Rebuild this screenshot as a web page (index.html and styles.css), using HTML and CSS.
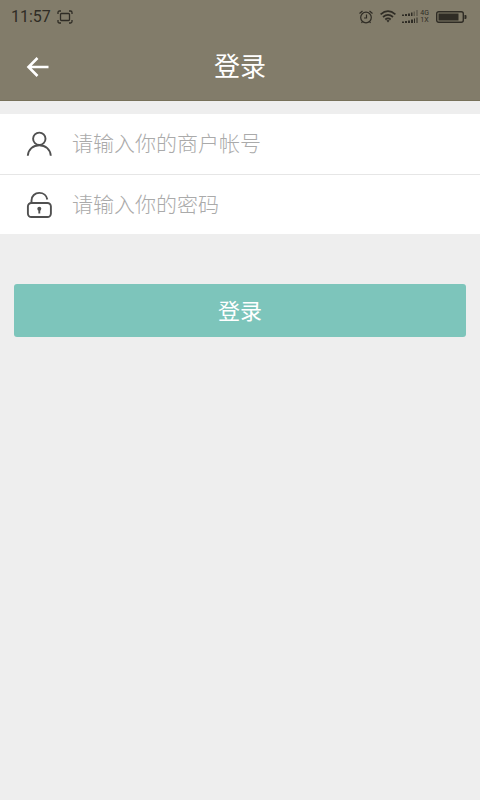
FILE: index.html
```html
<!DOCTYPE html>
<html lang="zh-CN">
<head>
<meta charset="utf-8">
<meta name="viewport" content="width=device-width, initial-scale=1">
<title>登录</title>
<link rel="stylesheet" href="styles.css">
</head>
<body>
<header class="top">
  <div class="status">
    <span class="clock">11:57</span>
    <svg width="16" height="14" viewBox="0 0 16 14" fill="none" stroke="#2f2c25" stroke-width="1.3" aria-hidden="true">
      <path d="M1 4V2.500Q1 1 2.500 1H4M12 1h1.500Q15 1 15 2.500V4M15 10v1.500Q15 13 13.500 13H12M4 13H2.500Q1 13 1 11.500V10"/>
      <rect x="3.500" y="3.500" width="9" height="7" rx="1"/>
    </svg>
    <div class="indicators">
      <svg width="14" height="14" viewBox="0 0 14 14" fill="none" stroke="#2f2c25" stroke-width="1.2" aria-hidden="true">
        <circle cx="7" cy="7.500" r="5.300"/>
        <path d="M.5 3.500 3.500 1M13.500 3.500 10.500 1M7.500 4.500V8H5M3.500 11.500 2.500 13M10.500 11.500l1 1.500"/>
      </svg>
      <svg width="16" height="13" viewBox="0 0 16 13" fill="none" stroke="#2f2c25" stroke-width="1.7" aria-hidden="true">
        <path d="M.6 4.400Q8-2 15.400 4.400M3 7Q8 2.600 13 7M5.300 9.500Q8 7.200 10.700 9.500"/>
        <path d="M6.400 10.600Q8 9.500 9.600 10.600L8 12.500z" fill="#2f2c25" stroke="none"/>
      </svg>
      <div class="cellular">
        <svg width="16" height="14" viewBox="0 0 16 14" fill="#2f2c25" aria-hidden="true">
          <path d="M0 4.500h2V6H0zM3 4h2v2H3zM6 3.500h2V6H6zM9 2.500h1.500V6H9zM0 11.500h2V13H0zM3 11h2v2H3zM6 10.500h2V13H6zM9 9.500h2V13H9zM12 8.500h1V13h-1zM14.500 7.500h1V13h-1z"/>
          <path d="M11.700 1.500h1V6h-1zM14.500 0h1v6h-1z" opacity=".6"/>
        </svg>
        <span class="network"><span>4G</span><span>1X</span></span>
      </div>
      <svg width="31" height="12" viewBox="0 0 31 12" aria-hidden="true">
        <rect x=".7" y=".7" width="26.600" height="10.600" rx="2" fill="none" stroke="#2f2c25" stroke-width="1.400"/>
        <path d="M2.500 2.500h20v7h-20zM28.500 4h1q1 0 1 1v2q0 1-1 1h-1z" fill="#2f2c25"/>
      </svg>
    </div>
  </div>
  <div class="navbar">
    <button class="back" type="button" aria-label="返回">
      <svg width="24" height="22" viewBox="0 0 24 22" fill="none" stroke="#fff" stroke-width="2.600" aria-hidden="true">
        <path d="M12.500 2 3.500 11l9 9M3.500 11h20"/>
      </svg>
    </button>
    <h1 class="title">登录</h1>
  </div>
</header>
<main>
  <form class="login">
    <div class="fields">
      <div class="field">
        <label for="account" aria-label="商户帐号">
          <svg width="28" height="28" viewBox="0 0 28 28" fill="none" stroke="#505050" stroke-width="1.900" aria-hidden="true">
            <circle cx="14.300" cy="8.800" r="6.200"/>
            <path d="M2.800 25.700C3.200 19.500 8 15.200 14.300 15.200S25.400 19.500 25.800 25.700"/>
          </svg>
        </label>
        <input id="account" type="text" placeholder="请输入你的商户帐号">
      </div>
      <div class="field">
        <label for="password" aria-label="密码">
          <svg width="28" height="28" viewBox="0 0 28 28" fill="none" stroke="#505050" stroke-width="1.900" aria-hidden="true">
            <rect x="2.900" y="12" width="23" height="14" rx="3.500"/>
            <path d="M6.500 12V9.500C6.500 5 10 1.900 14.300 1.900 18.400 1.900 21.700 4.500 22.300 8.500"/>
            <circle cx="14.300" cy="17.800" r="2" fill="#505050" stroke="none"/>
            <path d="M14.300 18v4.500"/>
          </svg>
        </label>
        <input id="password" type="password" placeholder="请输入你的密码">
      </div>
    </div>
    <button class="submit" type="button">登录</button>
  </form>
</main>
</body>
</html>
```
FILE: styles.css
```css
* {
  box-sizing: border-box;
}

body {
  margin: 0;
  min-height: 100vh;
  background: #eee;
  font-family: Roboto, "Noto Sans CJK SC", sans-serif;
}

button,
input {
  border: 0;
  padding: 0;
  background: none;
  font-family: inherit;
}

svg {
  display: block;
}

.top {
  background: #827c6a;
  border-bottom: 1px solid #77715a;
}

.status {
  display: flex;
  align-items: center;
  gap: 6px;
  height: 33px;
  padding: 0 13px 0 11px;
  color: #2f2c25;
}

.clock {
  font-size: 16px;
  font-weight: 400;
  line-height: 32px;
}

.indicators {
  display: flex;
  align-items: center;
  gap: 7px;
  margin-left: auto;
}

.cellular {
  display: flex;
  align-items: center;
  gap: 2px;
  margin-left: -1px;
}

.network {
  display: flex;
  flex-direction: column;
  font-size: 7px;
  line-height: 7px;
}

.navbar {
  display: grid;
  grid-template-columns: 76px 1fr 76px;
  align-items: center;
  height: 67px;
}

.back {
  display: flex;
  align-items: center;
  height: 48px;
  padding-left: 25px;
}

.title {
  margin: 0;
  color: #fff;
  font-size: 26px;
  font-weight: 400;
  line-height: 40px;
  text-align: center;
}

.fields {
  margin-top: 13px;
  background: #fff;
}

.field {
  display: flex;
  align-items: center;
  gap: 19px;
  height: 60px;
  padding: 0 25px;
}

.field + .field {
  border-top: 1px solid #e6e6e6;
}

.field input {
  flex: 1;
  min-width: 0;
  height: 40px;
  outline: 0;
  color: #333;
  font-size: 21px;
}

.field input::placeholder {
  color: #aaa;
  font-weight: 300;
}

.submit {
  display: block;
  width: calc(100% - 28px);
  height: 53px;
  margin: 50px 14px 0;
  padding-bottom: 3px;
  border-radius: 3px;
  background: #7dc5bb;
  color: #fff;
  font-size: 22px;
}
```
